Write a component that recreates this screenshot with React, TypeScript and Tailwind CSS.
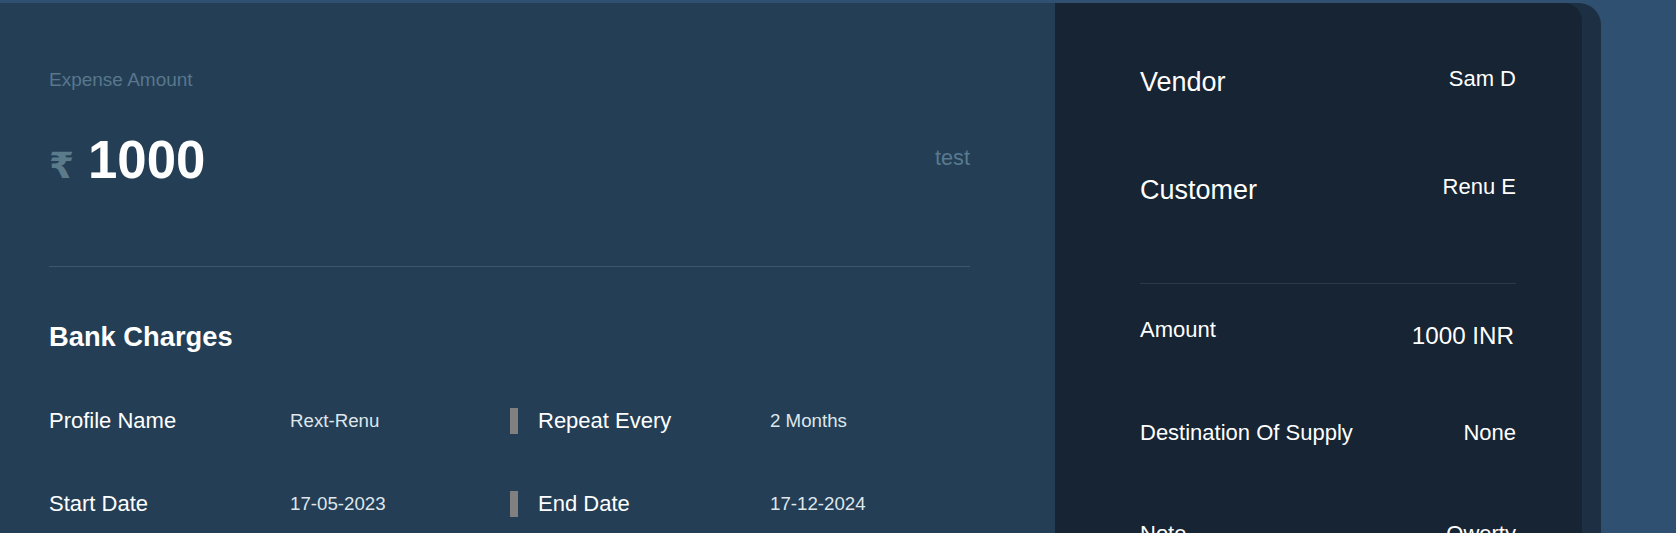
export default function App() {
  return (
    <div className="min-h-[533px] bg-[#2f5070] pt-[3px] font-['Liberation_Sans','DejaVu_Sans',Arial,sans-serif]">
      <div className="flex h-[530px] w-[1601px] overflow-hidden rounded-tr-[22px] bg-[#1d3043]">
        <section className="w-[1055px] shrink-0 bg-[#243e55] pl-[49px] pr-[85px] pt-[66px]">
          <p className="text-[19px] leading-[22px] text-[#58778c]">Expense Amount</p>

          <div className="mt-[39px] flex items-start justify-between">
            <div className="flex items-baseline">
              <span className="w-[39px] text-[36px] font-bold leading-[60px] text-[#5b7a8a]">₹</span>
              <span className="text-[52.8px] font-bold leading-[60px] text-white">1000</span>
            </div>
            <span className="mt-[15px] text-[21.7px] leading-[26px] text-[#587a8e]">test</span>
          </div>

          <div className="mt-[70px] h-px bg-[#3e5771]" />

          <h2 className="mt-[54px] text-[27.3px] font-bold leading-[32px] text-white">Bank Charges</h2>

          <div className="mt-[55px] flex flex-col gap-[57px]">
            <DetailRow label="Profile Name" value="Rext-Renu" label2="Repeat Every" value2="2 Months" />
            <DetailRow label="Start Date" value="17-05-2023" label2="End Date" value2="17-12-2024" />
          </div>
        </section>

        <aside className="w-[527px] shrink-0 rounded-tr-[18px] bg-[#162433] pl-[85px] pr-[66px] pt-[64px] text-white">
          <div className="flex items-start justify-between">
            <span className="text-[27px] leading-[30px]">Vendor</span>
            <span className="text-[22px] leading-[23px]">Sam D</span>
          </div>
          <div className="mt-[78px] flex items-start justify-between">
            <span className="text-[27px] leading-[30px]">Customer</span>
            <span className="text-[22px] leading-[23px]">Renu E</span>
          </div>

          <div className="mt-[78px] h-px bg-[#2b3a4a]" />

          <div className="mt-[33px] flex items-start justify-between">
            <span className="text-[22px] leading-[26px]">Amount</span>
            <span className="mr-[2px] mt-[5px] text-[24.2px] leading-[28px]">1000 INR</span>
          </div>
          <div className="mt-[70px] flex items-start justify-between">
            <span className="text-[22px] leading-[26px]">Destination Of Supply</span>
            <span className="text-[22px] leading-[26px]">None</span>
          </div>
          <div className="mt-[75px] flex items-start justify-between">
            <span className="text-[22px] leading-[26px]">Note</span>
            <span className="text-[22px] leading-[26px]">Qwerty</span>
          </div>
        </aside>
      </div>
    </div>
  )
}

function DetailRow({ label, value, label2, value2 }: { label: string; value: string; label2: string; value2: string }) {
  return (
    <div className="flex">
      <div className="flex w-[461px]">
        <span className="w-[241px] text-[22px] leading-[26px] text-white">{label}</span>
        <span className="text-[18.7px] leading-[26px] text-[#dfe6ec]">{value}</span>
      </div>
      <div className="flex border-l-[8px] border-[#808080] pl-[20px]">
        <span className="w-[232px] text-[22px] leading-[26px] text-white">{label2}</span>
        <span className="text-[18.7px] leading-[26px] text-[#dfe6ec]">{value2}</span>
      </div>
    </div>
  )
}
